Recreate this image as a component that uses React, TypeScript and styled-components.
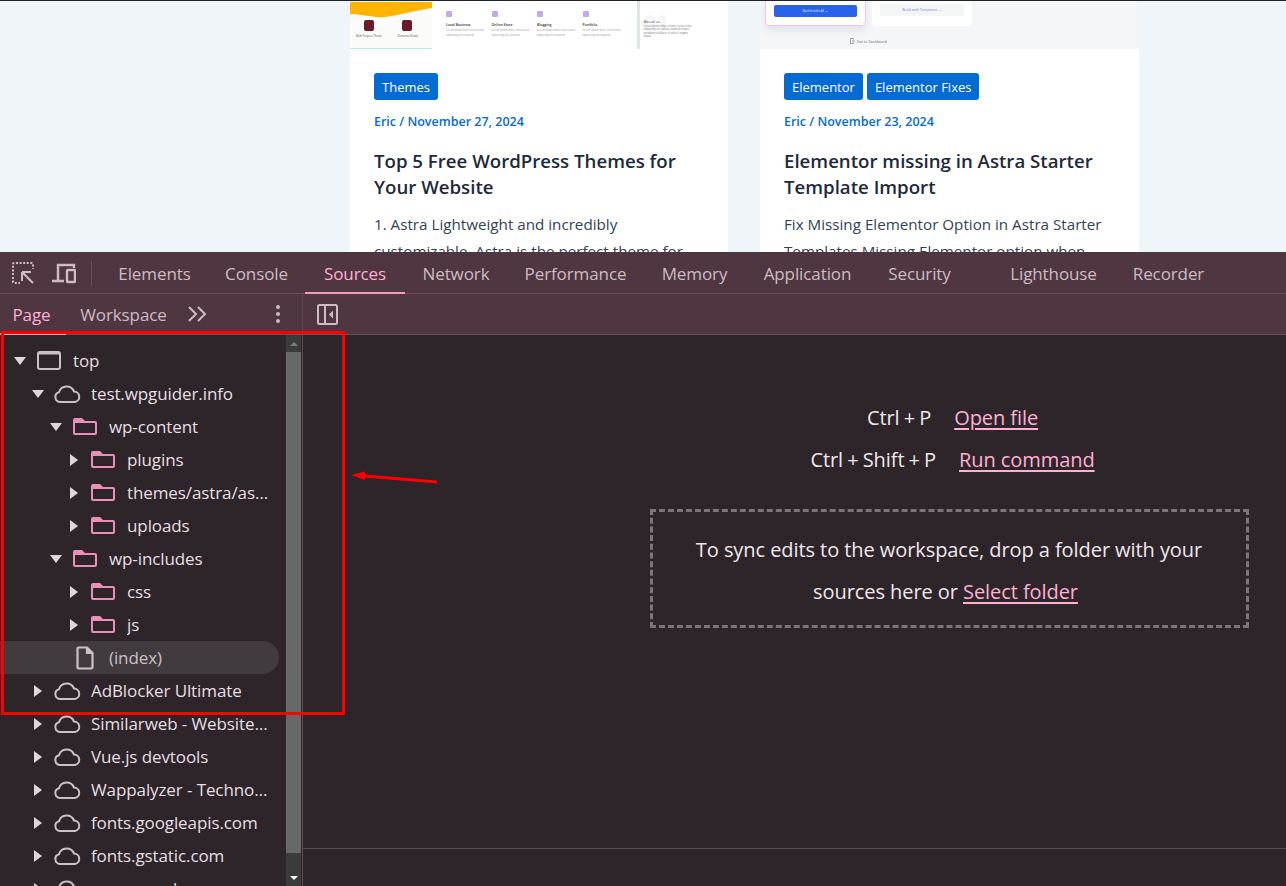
import styled, { createGlobalStyle } from "styled-components";

const GlobalStyle = createGlobalStyle`
  html, body {
    margin: 0;
    padding: 0;
    width: 1286px;
    height: 886px;
    overflow: hidden;
    font-family: "Open Sans", "Noto Sans", sans-serif;
  }
  * { box-sizing: border-box; }
`;

const Screen = styled.div`
  position: relative;
  width: 1286px;
  height: 886px;
  display: flex;
  flex-direction: column;
  overflow: hidden;
`;

/* ---- page behind devtools ---- */

const WebPage = styled.div`
  height: 252px;
  flex: none;
  overflow: hidden;
  background: #f0f5fa;
  border-top: 1px solid #1e2328;
  display: flex;
  gap: 32px;
  padding-left: 350px;
`;

const Card = styled.article<{ $w: number }>`
  width: ${(p) => p.$w}px;
  flex: none;
  background: #fff;
`;

const Thumb = styled.div<{ $bg: string }>`
  height: 48px;
  background: ${(p) => p.$bg};
  overflow: hidden;
  display: flex;
  position: relative;
`;

const CardBody = styled.div`
  padding: 24px 24px 0;
`;

const Tags = styled.div`
  display: flex;
  gap: 4px;
`;

const Tag = styled.span`
  height: 27px;
  line-height: 28px;
  padding: 0 8px;
  border-radius: 3px;
  background: #046bd2;
  color: #fff;
  font-size: 13px;
`;

const Meta = styled.div`
  margin-top: 14px;
  color: #046bd2;
  font-size: 12.5px;
  font-weight: 600;
  line-height: 16px;
`;

const Title = styled.h2`
  margin: 18px 0 0;
  color: #1e293b;
  font-size: 18.65px;
  font-weight: 600;
  line-height: 26px;
`;

const Excerpt = styled.p`
  margin: 11px 0 0;
  color: #334155;
  font-size: 15.2px;
  line-height: 27px;
`;

const Hero = styled.div`
  width: 82px;
  flex: none;
  background: #fbfbf9;
  border-bottom: 1px solid #aef3e6;
  position: relative;
`;

const HeroApps = styled.div`
  position: absolute;
  left: 14px;
  top: 19px;
  display: flex;
  gap: 28px;
`;

const HeroApp = styled.div`
  width: 10px;
  height: 11px;
  border-radius: 2px;
  background: #6a1a2a;
`;

const HeroCaption = styled.div`
  position: absolute;
  left: 6px;
  right: 14px;
  top: 33px;
  display: flex;
  justify-content: space-between;
  font-size: 2.6px;
  color: #555;
`;

const Features = styled.div`
  display: flex;
  gap: 4.5px;
  padding: 10px 0 0 14px;
`;

const Feature = styled.div`
  width: 41px;
  font-size: 2.6px;
  line-height: 5.5px;
  color: #999;
`;

const FeatureIcon = styled.div`
  width: 6px;
  height: 6px;
  border-radius: 1px;
  background: #c4aaec;
  margin-bottom: 5px;
`;

const FeatureName = styled.div`
  font-size: 3.4px;
  font-weight: 700;
  color: #555;
`;

const AboutStrip = styled.div`
  margin-left: 13px;
  width: 3px;
  height: 48px;
  background: #dfe3e1;
  flex: none;
`;

const About = styled.div`
  position: relative;
  padding: 18px 0 0 4px;
  width: 56px;
  font-size: 2.6px;
  line-height: 3.4px;
  color: #777;
`;

const AboutNumber = styled.span`
  position: absolute;
  left: 4px;
  top: 8px;
  font-size: 22px;
  line-height: 24px;
  font-weight: 700;
  color: #f4f5f5;
`;

const AboutName = styled.div`
  position: relative;
  font-size: 4px;
  line-height: 6px;
  color: #555;
`;

const AboutCopy = styled.div`
  position: relative;
`;

const Choices = styled.div`
  display: flex;
  gap: 6px;
  padding-left: 5px;
  align-items: flex-start;
`;

const Choice = styled.div<{ $active?: boolean }>`
  width: ${(p) => (p.$active ? 101 : 100)}px;
  height: 26px;
  margin-top: -1px;
  background: #fff;
  border-radius: 0 0 4px 4px;
  border: ${(p) => (p.$active ? "1px solid #f4c5f0" : "none")};
  box-shadow: ${(p) => (p.$active ? "0 4px 8px rgba(80,80,120,.12)" : "none")};
  padding: 4px 8px 0;
`;

const ChoiceButton = styled.div<{ $active?: boolean }>`
  height: 12px;
  line-height: 12px;
  border-radius: 2px;
  text-align: center;
  font-size: 3.6px;
  background: ${(p) => (p.$active ? "#2764eb" : "#f4f6f6")};
  color: ${(p) => (p.$active ? "#e5ecff" : "#6f86cc")};
`;

const ExitLink = styled.div`
  position: absolute;
  left: 90px;
  top: 37px;
  display: flex;
  align-items: center;
  gap: 2px;
  font-size: 3.6px;
  color: #666;
`;

/* ---- devtools ---- */

const DevTools = styled.div`
  flex: 1;
  min-height: 0;
  display: flex;
  flex-direction: column;
  background: #2d2529;
  color: #e8dfe3;
`;

const TabBar = styled.div`
  height: 42px;
  flex: none;
  display: flex;
  align-items: stretch;
  background: #503640;
  border-bottom: 1px solid #6b4f5a;
`;

const BarIcons = styled.div`
  width: 101px;
  flex: none;
  display: flex;
  align-items: center;
  gap: 15px;
  padding-left: 11px;
`;

const BarDivider = styled.div`
  width: 1px;
  height: 24px;
  background: #6b4f5a;
`;

const Tab = styled.div<{ $active?: boolean; $w: number; $after?: number }>`
  width: ${(p) => p.$w}px;
  margin-right: ${(p) => p.$after ?? 0}px;
  flex: none;
  display: flex;
  align-items: center;
  justify-content: center;
  padding-top: 2px;
  font-size: 17px;
  letter-spacing: -0.1px;
  color: ${(p) => (p.$active ? "#ffb0d4" : "#cdbcc3")};
  border-bottom: 2px solid ${(p) => (p.$active ? "#f39ac4" : "transparent")};
  margin-bottom: -1px;
`;

const Workarea = styled.div`
  flex: 1;
  min-height: 0;
  display: flex;
`;

const Sidebar = styled.aside`
  width: 303px;
  flex: none;
  display: flex;
  flex-direction: column;
  border-right: 1px solid #5a4a52;
`;

const SideTabs = styled.div`
  height: 41px;
  flex: none;
  display: flex;
  align-items: stretch;
  background: #503640;
  border-bottom: 1px solid #6b4f5a;
`;

const SideTab = styled.div<{ $active?: boolean; $w: number }>`
  width: ${(p) => p.$w}px;
  flex: none;
  display: flex;
  align-items: center;
  justify-content: center;
  padding: 2px ${(p) => (p.$active ? 3 : 0)}px 0 0;
  font-size: 17px;
  letter-spacing: -0.1px;
  color: ${(p) => (p.$active ? "#ffb0d4" : "#cdbcc3")};
  border-bottom: 2px solid ${(p) => (p.$active ? "#f39ac4" : "transparent")};
  margin-bottom: -1px;
`;

const SideActions = styled.div`
  flex: 1;
  display: flex;
  align-items: center;
  justify-content: space-between;
  padding: 0 21px 0 6px;
`;

const TreeArea = styled.div`
  flex: 1;
  min-height: 0;
  display: flex;
  overflow: hidden;
`;

const Tree = styled.ul`
  flex: 1;
  min-width: 0;
  margin: 0;
  padding: 9px 7px 0 0;
  list-style: none;
`;

const Row = styled.li<{ $level: number; $selected?: boolean }>`
  height: 33px;
  display: flex;
  align-items: center;
  padding-left: ${(p) => 14 + p.$level * 18}px;
  font-size: 17px;
  letter-spacing: -0.1px;
  color: ${(p) => (p.$selected ? "#cdc1c7" : "#e8dfe3")};
  background: ${(p) => (p.$selected ? "#413a3e" : "transparent")};
  border-radius: ${(p) => (p.$selected ? "0 17px 17px 0" : "0")};
`;

const Caret = styled.span<{ $open?: boolean; $none?: boolean }>`
  width: 12px;
  height: 12px;
  flex: none;
  display: flex;
  align-items: center;
  justify-content: center;
  &::before {
    content: "";
    display: ${(p) => (p.$none ? "none" : "block")};
    ${(p) =>
      p.$open
        ? `border-left: 6px solid transparent; border-right: 6px solid transparent; border-top: 8px solid #e0d5da;`
        : `border-top: 6px solid transparent; border-bottom: 6px solid transparent; border-left: 8px solid #e0d5da;`}
  }
`;

const IconSlot = styled.span`
  width: 28px;
  margin-left: 9px;
  flex: none;
  display: flex;
  align-items: center;
  justify-content: center;
`;

const RowLabel = styled.span`
  margin-left: 10px;
  white-space: nowrap;
  overflow: hidden;
  text-overflow: ellipsis;
  padding-right: 8px;
`;

const Scrollbar = styled.div`
  width: 15px;
  margin-right: 1px;
  flex: none;
  display: flex;
  flex-direction: column;
  align-items: center;
  background: #3d3a3b;
`;

const ScrollArrow = styled.span<{ $down?: boolean }>`
  height: 17px;
  flex: none;
  display: flex;
  align-items: center;
  &::before {
    content: "";
    border-left: 4px solid transparent;
    border-right: 4px solid transparent;
    ${(p) => (p.$down ? "border-top: 4px solid #fff;" : "border-bottom: 4px solid #7b7b7b;")}
  }
`;

const ScrollThumb = styled.div`
  width: 100%;
  height: 501px;
  flex: none;
  background: #686868;
`;

const ScrollSpace = styled.div`
  flex: 1;
`;

const Editor = styled.main`
  flex: 1;
  min-width: 0;
  display: flex;
  flex-direction: column;
`;

const EditorBar = styled.div`
  height: 41px;
  flex: none;
  display: flex;
  align-items: center;
  padding-left: 12px;
  background: #503640;
  border-bottom: 1px solid #6b4f5a;
`;

const Welcome = styled.div`
  flex: 1;
  min-height: 0;
  display: flex;
  flex-direction: column;
  align-items: center;
  padding: 61px 38px 0 347px;
  font-size: 20px;
  letter-spacing: -0.07px;
`;

const Shortcut = styled.div`
  height: 42px;
  margin-left: 7px;
  display: flex;
  align-items: center;
  justify-content: center;
  gap: 23px;
`;

const Keys = styled.span`
  color: #f0e8ec;
  word-spacing: -1px;
`;

const DocLink = styled.a`
  color: #ffb0d4;
  text-decoration: underline;
  text-decoration-thickness: 2px;
  text-underline-offset: 3px;
`;

const DropZone = styled.div`
  width: 599px;
  height: 119px;
  margin-top: 29px;
  border: 3px dashed #7d7479;
  text-align: center;
  line-height: 42px;
  padding-top: 17px;
  color: #f0e8ec;
`;

const DropLine = styled.span`
  display: inline-block;
  margin-right: 7px;
`;

const StatusRule = styled.div`
  height: 38px;
  flex: none;
  border-top: 1px solid #5a4a52;
`;

/* ---- annotation on top of the shot ---- */

const Highlight = styled.div`
  position: absolute;
  left: 1px;
  top: 331px;
  width: 344px;
  height: 384px;
  border: 3px solid #ff0000;
  pointer-events: none;
`;

const ArrowMark = styled.svg`
  position: absolute;
  left: 345px;
  top: 465px;
`;

const InspectIcon = () => (
  <svg width="24" height="24" viewBox="0 0 24 24" fill="none" stroke="#cdbcc3" strokeWidth="2">
    <path d="M2 14V3a1 1 0 0 1 1-1h18a1 1 0 0 1 1 1v5" strokeDasharray="2 1.6" />
    <path d="M2 16v5a1 1 0 0 0 1 1h6" strokeDasharray="2 1.6" />
    <path d="M11 11h9M11 11v9M11 11l11 11" />
  </svg>
);

const DeviceIcon = () => (
  <svg width="26" height="24" viewBox="0 0 26 24" fill="none" stroke="#cdbcc3" strokeWidth="2.4">
    <path d="M2 20h12M8 20V4h16v3" />
    <rect x="17" y="9" width="8" height="12" rx="1" />
  </svg>
);

const WindowIcon = () => (
  <svg width="24" height="19" viewBox="0 0 24 19" fill="none" stroke="#cdc1c7" strokeWidth="2">
    <rect x="1" y="1" width="22" height="17" rx="2" />
    <path d="M1 2.5h22" />
  </svg>
);

const CloudIcon = () => (
  <svg width="28" height="20" viewBox="0 0 28 20" fill="none" stroke="#cdc1c7" strokeWidth="2">
    <path d="M7 18a5 5 0 0 1-1-9.8A8 8 0 0 1 21 7.5 5.3 5.3 0 0 1 22 18z" />
  </svg>
);

const FolderIcon = () => (
  <svg width="24" height="19" viewBox="0 0 24 19" fill="#ea8fbb">
    <path
      fillRule="evenodd"
      d="M2 1h7l3 3h10a2 2 0 0 1 2 2v10a2 2 0 0 1-2 2H2a2 2 0 0 1-2-2V3a2 2 0 0 1 2-2zM2 6v10h20V6z"
    />
  </svg>
);

const FileIcon = () => (
  <svg width="18" height="24" viewBox="0 0 18 24" fill="none" stroke="#cdc1c7" strokeWidth="2.2">
    <path d="M1.5 2.5a1 1 0 0 1 1-1H11l5.5 5.5v14.5a1 1 0 0 1-1 1h-13a1 1 0 0 1-1-1z" strokeLinejoin="round" />
    <path d="M11 1.5V7h5.5" fill="#cdc1c7" />
  </svg>
);

const MoreTabsIcon = () => (
  <svg width="20" height="16" viewBox="0 0 20 16" fill="none" stroke="#cdbcc3" strokeWidth="2">
    <path d="M2 1l7 7-7 7M11 1l7 7-7 7" />
  </svg>
);

const DotsIcon = () => (
  <svg width="6" height="20" viewBox="0 0 6 20" fill="#cdbcc3">
    <circle cx="3" cy="3" r="2" />
    <circle cx="3" cy="10" r="2" />
    <circle cx="3" cy="17" r="2" />
  </svg>
);

const PanelIcon = () => (
  <svg width="24" height="24" viewBox="0 0 24 24" fill="none" stroke="#cdbcc3" strokeWidth="2">
    <rect x="3" y="3" width="19" height="19" rx="1.5" />
    <path d="M10 3v19" />
    <path d="M18 8.5v8l-4-4z" fill="#cdbcc3" stroke="none" />
  </svg>
);

const ExitIcon = () => (
  <svg width="5" height="6" viewBox="0 0 5 6" fill="none" stroke="#777" strokeWidth="0.7">
    <path d="M3.4 1.6V.5H.5v5h2.9V4.4M2 3h3" />
  </svg>
);

type TreeItem = {
  level: number;
  label: string;
  icon: "window" | "cloud" | "folder" | "file";
  open?: boolean;
  selected?: boolean;
};

const treeItems: TreeItem[] = [
  { level: 0, label: "top", icon: "window", open: true },
  { level: 1, label: "test.wpguider.info", icon: "cloud", open: true },
  { level: 2, label: "wp-content", icon: "folder", open: true },
  { level: 3, label: "plugins", icon: "folder" },
  { level: 3, label: "themes/astra/assets", icon: "folder" },
  { level: 3, label: "uploads", icon: "folder" },
  { level: 2, label: "wp-includes", icon: "folder", open: true },
  { level: 3, label: "css", icon: "folder" },
  { level: 3, label: "js", icon: "folder" },
  { level: 2, label: "(index)", icon: "file", selected: true },
  { level: 1, label: "AdBlocker Ultimate", icon: "cloud" },
  { level: 1, label: "Similarweb - Website Traffic", icon: "cloud" },
  { level: 1, label: "Vue.js devtools", icon: "cloud" },
  { level: 1, label: "Wappalyzer - Technology profiler", icon: "cloud" },
  { level: 1, label: "fonts.googleapis.com", icon: "cloud" },
  { level: 1, label: "fonts.gstatic.com", icon: "cloud" },
  { level: 1, label: "www.google.com", icon: "cloud" },
];

const tabs = [
  { label: "Elements", w: 107 },
  { label: "Console", w: 97 },
  { label: "Sources", w: 100, active: true },
  { label: "Network", w: 102 },
  { label: "Performance", w: 137 },
  { label: "Memory", w: 101 },
  { label: "Application", w: 125 },
  { label: "Security", w: 99, after: 23 },
  { label: "Lighthouse", w: 123 },
  { label: "Recorder", w: 107 },
];

const treeIcon = (name: TreeItem["icon"]) => {
  if (name === "window") return <WindowIcon />;
  if (name === "cloud") return <CloudIcon />;
  if (name === "folder") return <FolderIcon />;
  return <FileIcon />;
};

const features = ["Local Business", "Online Store", "Blogging", "Portfolio"];

export default function App() {
  return (
    <Screen>
      <GlobalStyle />
      <WebPage>
        <Card $w={378}>
          <Thumb $bg="#fff">
            <Hero>
              <svg width="82" height="16" viewBox="0 0 82 16">
                <path d="M0 0h82V6c-8 1-16 3-26 5-10 2-18 5-30 4C16 14 8 12 0 12z" fill="#ffb400" />
              </svg>
              <HeroApps>
                <HeroApp />
                <HeroApp />
              </HeroApps>
              <HeroCaption>
                <span>Multi Purpose Theme</span>
                <span>Elementor Ready</span>
              </HeroCaption>
            </Hero>
            <Features>
              {features.map((name) => (
                <Feature key={name}>
                  <FeatureIcon />
                  <FeatureName>{name}</FeatureName>
                  Lorem ipsum dolor consectetur adipiscing elit eiusmod.
                </Feature>
              ))}
            </Features>
            <AboutStrip />
            <About>
              <AboutNumber>01</AboutNumber>
              <AboutName>About us</AboutName>
              <AboutCopy>
                Lorem ipsum dolor sit amet consectetur adipiscing elit sed do eiusmod tempor incididunt ut labore et
                dolore magna aliqua
              </AboutCopy>
            </About>
          </Thumb>
          <CardBody>
            <Tags>
              <Tag>Themes</Tag>
            </Tags>
            <Meta>Eric / November 27, 2024</Meta>
            <Title>Top 5 Free WordPress Themes for Your Website</Title>
            <Excerpt>1. Astra Lightweight and incredibly customizable, Astra is the perfect theme for</Excerpt>
          </CardBody>
        </Card>
        <Card $w={379}>
          <Thumb $bg="#f5f6f8">
            <Choices>
              <Choice $active>
                <ChoiceButton $active>Build with AI →</ChoiceButton>
              </Choice>
              <Choice>
                <ChoiceButton>Build with Templates →</ChoiceButton>
              </Choice>
            </Choices>
            <ExitLink>
              <ExitIcon />
              Exit to Dashboard
            </ExitLink>
          </Thumb>
          <CardBody>
            <Tags>
              <Tag>Elementor</Tag>
              <Tag>Elementor Fixes</Tag>
            </Tags>
            <Meta>Eric / November 23, 2024</Meta>
            <Title>Elementor missing in Astra Starter Template Import</Title>
            <Excerpt>Fix Missing Elementor Option in Astra Starter Templates Missing Elementor option when</Excerpt>
          </CardBody>
        </Card>
      </WebPage>

      <DevTools>
        <TabBar>
          <BarIcons>
            <InspectIcon />
            <DeviceIcon />
            <BarDivider />
          </BarIcons>
          {tabs.map((t) => (
            <Tab key={t.label} $w={t.w} $active={t.active} $after={t.after}>
              {t.label}
            </Tab>
          ))}
        </TabBar>
        <Workarea>
          <Sidebar>
            <SideTabs>
              <SideTab $w={66} $active>
                Page
              </SideTab>
              <SideTab $w={115}>Workspace</SideTab>
              <SideActions>
                <MoreTabsIcon />
                <DotsIcon />
              </SideActions>
            </SideTabs>
            <TreeArea>
              <Tree>
                {treeItems.map((item) => (
                  <Row key={item.label} $level={item.level} $selected={item.selected}>
                    <Caret $open={item.open} $none={item.icon === "file"} />
                    <IconSlot>{treeIcon(item.icon)}</IconSlot>
                    <RowLabel>{item.label}</RowLabel>
                  </Row>
                ))}
              </Tree>
              <Scrollbar>
                <ScrollArrow />
                <ScrollThumb />
                <ScrollSpace />
                <ScrollArrow $down />
              </Scrollbar>
            </TreeArea>
          </Sidebar>
          <Editor>
            <EditorBar>
              <PanelIcon />
            </EditorBar>
            <Welcome>
              <Shortcut>
                <Keys>Ctrl + P</Keys>
                <DocLink>Open file</DocLink>
              </Shortcut>
              <Shortcut>
                <Keys>Ctrl + Shift + P</Keys>
                <DocLink>Run command</DocLink>
              </Shortcut>
              <DropZone>
                To sync edits to the workspace, drop a folder with your
                <br />
                <DropLine>
                  sources here or <DocLink>Select folder</DocLink>
                </DropLine>
              </DropZone>
            </Welcome>
            <StatusRule />
          </Editor>
        </Workarea>
      </DevTools>

      <Highlight />
      <ArrowMark width="95" height="20" viewBox="0 0 95 20">
        <path d="M92 17L20 11" stroke="#ff0000" strokeWidth="3" />
        <path d="M6 10L20 6.5V15z" fill="#ff0000" />
      </ArrowMark>
    </Screen>
  );
}
